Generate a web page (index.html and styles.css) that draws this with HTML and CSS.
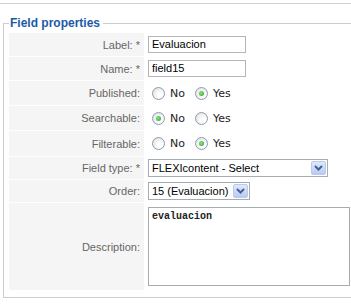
FILE: index.html
```html
<!DOCTYPE html>
<html lang="en">
<head>
  <meta charset="UTF-8" />
  <title>Field properties</title>
  <link rel="stylesheet" href="styles.css">
</head>
<body>
  <div class="topbar"></div>
  <fieldset class="props">
    <legend>Field properties</legend>
    <table class="props-table">
      <tr class="row-text">
        <td class="key">Label: *</td>
        <td class="val"><span class="input">Evaluacion</span></td>
      </tr>
      <tr class="row-text">
        <td class="key">Name: *</td>
        <td class="val"><span class="input">field15</span></td>
      </tr>
      <tr class="row-radio">
        <td class="key">Published:</td>
        <td class="val"><span class="radio"></span><span class="opt">No</span><span class="radio checked"></span><span class="opt">Yes</span></td>
      </tr>
      <tr class="row-radio">
        <td class="key">Searchable:</td>
        <td class="val"><span class="radio checked"></span><span class="opt">No</span><span class="radio"></span><span class="opt">Yes</span></td>
      </tr>
      <tr class="row-radio tall">
        <td class="key">Filterable:</td>
        <td class="val"><span class="radio"></span><span class="opt">No</span><span class="radio checked"></span><span class="opt">Yes</span></td>
      </tr>
      <tr class="row-select">
        <td class="key">Field type: *</td>
        <td class="val">
          <span class="select wide"><span class="select-text">FLEXIcontent - Select</span><span class="arrow"><svg width="9" height="6" viewBox="0 0 9 6"><path d="M1 1 L4.5 4.5 L8 1" fill="none" stroke="#4a5f8c" stroke-width="2"/></svg></span></span>
        </td>
      </tr>
      <tr class="row-select">
        <td class="key">Order:</td>
        <td class="val">
          <span class="select narrow"><span class="select-text">15 (Evaluacion)</span><span class="arrow"><svg width="9" height="6" viewBox="0 0 9 6"><path d="M1 1 L4.5 4.5 L8 1" fill="none" stroke="#4a5f8c" stroke-width="2"/></svg></span></span>
        </td>
      </tr>
      <tr class="row-desc">
        <td class="key">Description:</td>
        <td class="val"><div class="textarea">evaluacion</div></td>
      </tr>
    </table>
  </fieldset>
</body>
</html>
```

FILE: styles.css
```css
* {
  box-sizing: border-box;
}

body {
  margin: 0;
  background: #fff;
  font-family: 'Liberation Sans', Arial, sans-serif;
  font-size: 11px;
  color: #000;
  overflow: hidden;
}

.topbar {
  height: 4px;
  border-bottom: 1px solid #d0d0d0;
}

.props {
  margin: 12px 0 0 3px;
  width: 348px;
  padding: 1px 0 6px 4px;
  border: 1px solid #cccccc;
  border-right: 0;
}

.props legend {
  margin-left: 1px;
  padding: 0 3px 0 1px;
  color: #1b5aa6;
  font-weight: bold;
  font-size: 12px;
  line-height: 15px;
}

.props-table {
  border-spacing: 1px;
  border-collapse: separate;
}

.props-table td {
  padding: 0;
}

.key {
  width: 135px;
  background: #f5f5f5;
  color: #666;
  text-align: right;
  padding-right: 4px !important;
  white-space: nowrap;
}

.val {
  padding-left: 3px !important;
}

.row-text td { height: 23px; }
.row-radio td { height: 24px; }
.row-radio.tall td { height: 25px; }
.row-select td { height: 22px; }
.row-desc td { height: 87px; }

.input {
  display: block;
  width: 98px;
  height: 17px;
  border: 1px solid #b5b5b5;
  padding: 0 3px;
  line-height: 15px;
  font-size: 11px;
}

.radio {
  display: inline-block;
  vertical-align: middle;
  width: 13px;
  height: 13px;
  margin: 0 5px 0 4px;
  border: 1px solid #8b9cb2;
  border-radius: 50%;
  background: radial-gradient(circle at 65% 65%, #ffffff 20%, #e4e4e0 80%);
  position: relative;
}

.radio.checked::after {
  content: "";
  position: absolute;
  left: 3px;
  top: 3px;
  width: 5px;
  height: 5px;
  border-radius: 50%;
  background: radial-gradient(circle at 40% 40%, #8ee08e, #21a121);
}

.opt {
  display: inline-block;
  vertical-align: middle;
  margin-right: 6px;
  font-family: 'DejaVu Sans', Verdana, sans-serif;
  font-size: 11px;
  color: #222;
}

.select {
  display: flex;
  align-items: center;
  height: 18px;
  border: 1px solid #a5acb2;
  padding: 1px;
  font-size: 11px;
}

.select.wide { width: 180px; }
.select.narrow { width: 102px; }

.select-text {
  flex: 1;
  padding-left: 2px;
  white-space: nowrap;
  overflow: hidden;
}

.arrow {
  display: flex;
  align-items: center;
  justify-content: center;
  width: 15px;
  height: 14px;
  border: 1px solid #b9c9ef;
  border-radius: 2px;
  background: linear-gradient(#dfe8fc, #b8cbf3);
}

.textarea {
  width: 202px;
  height: 79px;
  border: 1px solid #a5acb2;
  padding: 3px 3px;
  font-family: 'Liberation Mono', 'Courier New', monospace;
  font-size: 10px;
  font-weight: bold;
  color: #222;
  margin-top: 2px;
  margin-bottom: 3px;
}
```
